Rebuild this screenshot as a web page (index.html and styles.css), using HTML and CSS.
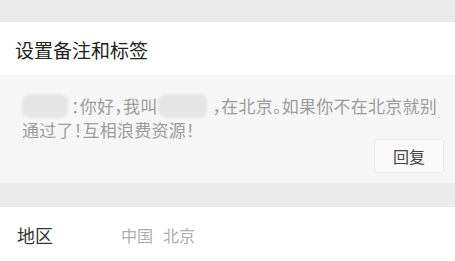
FILE: index.html
```html
<!DOCTYPE html>
<html lang="zh-CN">
<head>
<meta charset="utf-8">
<title>设置备注和标签</title>
<link rel="stylesheet" href="styles.css">
</head>
<body>
<div class="page">
  <div class="band"></div>
  <section class="title-sec">
    <h1 class="title">设置备注和标签</h1>
  </section>
  <section class="msg">
    <p class="msg-text"><span class="mask mask-a"></span>：你好，我叫<span class="mask mask-b"></span>，在北京。如果你不在北京就别通过了！互相浪费资源！</p>
    <div class="actions"><button class="reply">回复</button></div>
  </section>
  <div class="band band-b"></div>
  <section class="row">
    <span class="label">地区</span>
    <span class="value"><span>中国</span><span>北京</span></span>
  </section>
</div>
</body>
</html>
```
FILE: styles.css
```css
html, body {
  margin: 0;
  padding: 0;
  background: #ffffff;
}
body {
  font-family: "Noto Sans CJK SC", "Noto Sans", sans-serif;
}
.page {
  width: 455px;
  height: 261px;
  overflow: hidden;
}
.band {
  height: 22px;
  background: #ebebeb;
}
.band-b {
  height: 24px;
}
.title-sec {
  background: #ffffff;
  padding: 14px 15px 11px;
}
.title {
  margin: 0;
  font-size: 19px;
  line-height: 28px;
  font-weight: 400;
  color: #222222;
}
.msg {
  background: #f7f7f7;
  padding: 18.5px 11px 10px 22px;
}
.msg-text {
  margin: 0;
  font-size: 17px;
  line-height: 24px;
  letter-spacing: 0.25px;
  color: #9c9c9c;
  font-feature-settings: "halt";
}
.mask {
  display: inline-block;
  height: 24px;
  vertical-align: top;
  background: #e6e6e6;
  border-radius: 8px;
  filter: blur(1px);
}
.mask-a {
  width: 46px;
  margin-right: 3px;
}
.mask-b {
  width: 49px;
  margin-right: 6px;
}
.actions {
  display: flex;
  justify-content: flex-end;
  margin-top: -2.5px;
}
.reply {
  width: 70px;
  height: 34px;
  padding: 0;
  border: 1px solid #ececec;
  border-radius: 3px;
  background: #fafafa;
  font-family: "Noto Sans CJK SC", sans-serif;
  font-size: 16px;
  color: #444444;
}
.row {
  display: flex;
  align-items: center;
  background: #ffffff;
  padding: 16px 17px;
}
.label {
  width: 104px;
  font-size: 18px;
  line-height: 24px;
  color: #333333;
}
.value {
  display: flex;
  gap: 10px;
  font-size: 16px;
  line-height: 24px;
  color: #acacac;
}
```
